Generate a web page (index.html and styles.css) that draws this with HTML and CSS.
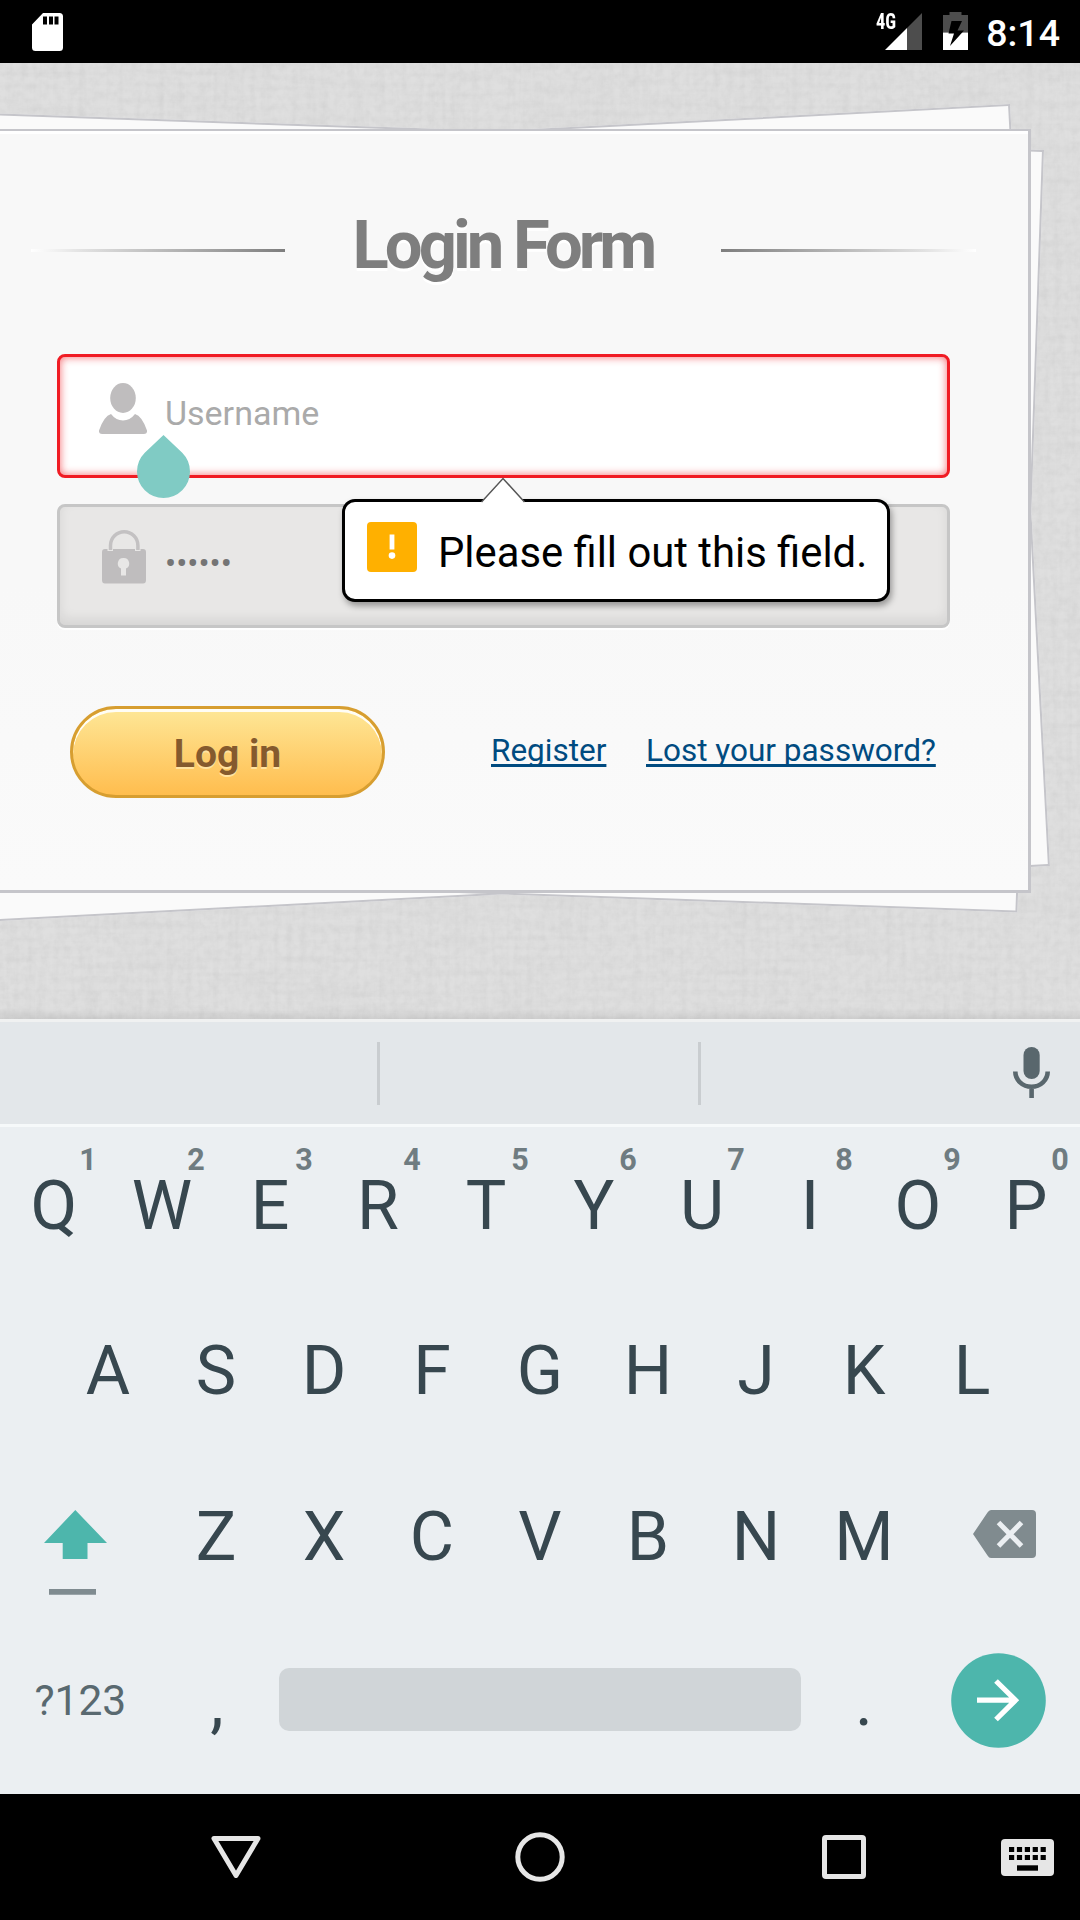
FILE: index.html
```html
<!DOCTYPE html>
<html lang="en">
<head>
<meta charset="utf-8">
<title>Login Form</title>
<link rel="stylesheet" href="styles.css">
</head>
<body>
<header class="status">
  <svg class="sd" viewBox="0 0 31 38"><path fill="#fff" fill-rule="evenodd" d="M11 0H27.500Q31 0 31 3.500V34.500Q31 38 27.500 38H3.500Q0 38 0 34.500V11.500ZM11 3.500V11.500H15V3.500ZM17 3.500V11.500H21V3.500ZM22.500 3.500V11.500H26.500V3.500Z"/></svg>
  <div class="status-right">
    <div class="signal">
      <span class="net">4G</span>
      <svg viewBox="0 0 37 37"><path fill="#4d4d4d" d="M37 0V37H22V15Z"/><path fill="#fff" d="M22 15V37H0Z"/></svg>
    </div>
    <svg class="battery" viewBox="0 0 25 38"><path fill="#4d4d4d" d="M6.500 0H18.500V3H25V20.500H0V3H6.500Z"/><path fill="#fff" d="M0 20.500H25V38H0Z"/><path fill="#000" d="M8.500 9H19L14.500 18.500H21L7 34L11 21.500H5.500Z"/></svg>
    <span class="time">8:14</span>
  </div>
</header>

<main class="page">
  <svg class="linen" width="1080" height="956">
    <filter id="grain" x="0" y="0" width="100%" height="100%"><feTurbulence type="fractalNoise" baseFrequency="0.14" numOctaves="3" seed="4"/><feColorMatrix values="0 0 0 0 0  0 0 0 0 0  0 0 0 0 0  .055 0 0 0 -.02"/></filter>
    <filter id="warp" x="0" y="0" width="100%" height="100%"><feTurbulence type="fractalNoise" baseFrequency="0.15 0.01" numOctaves="2" seed="9"/><feColorMatrix values="0 0 0 0 0  0 0 0 0 0  0 0 0 0 0  .04 0 0 0 -.016"/></filter>
    <filter id="weft" x="0" y="0" width="100%" height="100%"><feTurbulence type="fractalNoise" baseFrequency="0.01 0.15" numOctaves="2" seed="2"/><feColorMatrix values="0 0 0 0 0  0 0 0 0 0  0 0 0 0 0  .04 0 0 0 -.016"/></filter>
    <rect width="1080" height="956" filter="url(#grain)"/>
    <rect width="1080" height="956" filter="url(#warp)"/>
    <rect width="1080" height="956" filter="url(#weft)"/>
  </svg>
  <div class="sheet sheet-left"></div>
  <div class="sheet sheet-right"></div>
  <section class="card">
    <div class="title">
      <span class="rule rule-left"></span>
      <h1>Login Form</h1>
      <span class="rule rule-right"></span>
    </div>
    <div class="fields">
      <div class="field invalid">
        <svg class="user" viewBox="0 0 48 51"><g fill="#bfbdbe"><ellipse cx="24" cy="15" rx="12.800" ry="15"/><path d="M12 31Q17 37.500 24 37.500T36 31Q43 33 48 47.500Q48.500 51 45 51H3Q-.5 51 0 47.500Q5 33 12 31Z"/></g></svg>
        <span class="placeholder">Username</span>
        <svg class="handle" viewBox="0 0 53 63"><path fill="#80cbc4" d="M26.500 0L45.240 17.760A26.500 26.500 0 1 1 7.760 17.760Z"/></svg>
      </div>
      <div class="field">
        <svg class="lock" viewBox="0 0 44 54"><path fill="none" stroke="#c3c1c2" stroke-width="3.500" d="M8.500 20V15.500a13.700 13.700 0 0 1 27.400 0V20"/><path fill="#bfbdbe" d="M3 19H5.500V21H11V19H33V21H38.500V19H41Q44 19 44 22V50Q44 53.500 41 53.500H3Q0 53.500 0 50V22Q0 19 3 19Z"/><path fill="#e8e7e6" d="M21.500 28a5.500 5.500 0 0 1 2.500 10.500V45.500H19V38.500A5.500 5.500 0 0 1 21.500 28Z"/></svg>
        <span class="dots">••••••</span>
        <div class="bubble">
          <svg class="beak" viewBox="0 0 44 26"><path fill="#fff" stroke="#555" stroke-width="1.500" d="M.5 25L22 1.500L43.500 25"/></svg>
          <svg class="warn" viewBox="0 0 50 50"><rect width="50" height="50" rx="4" fill="#ffb000"/><path fill="#fff" d="M22.600 12.500H27.400V27.500H22.600Z"/><circle cx="25" cy="33.600" r="3.300" fill="#fff"/></svg>
          <span>Please fill out this field.</span>
        </div>
      </div>
    </div>
    <div class="actions">
      <button class="login">Log in</button>
      <a class="register">Register</a>
      <a class="lost">Lost your password?</a>
    </div>
  </section>
</main>

<section class="suggest">
  <span></span><span></span>
  <div><svg class="mic" viewBox="0 0 37 51"><rect x="10.500" width="16.200" height="32" rx="8.100" fill="#59676d"/><path fill="none" stroke="#59676d" stroke-width="4.600" d="M2.300 24.500a16.200 15.300 0 0 0 32.400 0M18.600 40V51"/></svg></div>
</section>

<section class="keys">
  <div class="row top">
    <div class="key">Q<sup>1</sup></div><div class="key">W<sup>2</sup></div><div class="key">E<sup>3</sup></div><div class="key">R<sup>4</sup></div><div class="key">T<sup>5</sup></div><div class="key">Y<sup>6</sup></div><div class="key">U<sup>7</sup></div><div class="key">I<sup>8</sup></div><div class="key">O<sup>9</sup></div><div class="key">P<sup>0</sup></div>
  </div>
  <div class="row">
    <div class="key">A</div><div class="key">S</div><div class="key">D</div><div class="key">F</div><div class="key">G</div><div class="key">H</div><div class="key">J</div><div class="key">K</div><div class="key">L</div>
  </div>
  <div class="row">
    <div class="side shift"><svg viewBox="0 0 63 85"><path fill="#4db6ac" d="M31.300 0L63 33H43.500V49H18.700V33H0Z"/><path fill="#7f8b90" d="M5 79H52V84.700H5Z"/></svg></div>
    <div class="key">Z</div><div class="key">X</div><div class="key">C</div><div class="key">V</div><div class="key">B</div><div class="key">N</div><div class="key">M</div>
    <div class="side back"><svg viewBox="0 0 63 48"><path fill="#808b8f" d="M18 0H59Q63 0 63 4V44Q63 48 59 48H18Q16 48 14.500 45.500L0 24L14.500 2.500Q16 0 18 0Z"/><path stroke="#ebeff2" stroke-width="5" d="M25.500 12.500L48.500 36M48.500 12.500L25.500 36"/></svg></div>
  </div>
  <div class="row bottom">
    <div class="sym">?123</div>
    <div class="key">,</div>
    <div class="space"></div>
    <div class="key period">.</div>
    <svg class="enter" viewBox="0 0 95 95"><circle cx="47.500" cy="47.500" r="47.300" fill="#4db6ac"/><path fill="none" stroke="#fff" stroke-width="5.200" d="M26 47.200H64M45 28L64.500 47.200L45 66.500"/></svg>
  </div>
</section>

<nav class="nav">
  <svg class="nav-back" viewBox="0 0 50 42"><path fill="none" stroke="#e6e6e6" stroke-width="5" stroke-linejoin="round" d="M3 2.500H47L25 39.500Z"/></svg>
  <svg class="nav-home" viewBox="0 0 50 50"><circle cx="25" cy="25" r="22.200" fill="none" stroke="#e6e6e6" stroke-width="5"/></svg>
  <svg class="nav-recent" viewBox="0 0 44 44"><rect x="2.500" y="2.500" width="39" height="39" rx="1.500" fill="none" stroke="#e6e6e6" stroke-width="5"/></svg>
  <svg class="nav-ime" viewBox="0 0 53 37"><rect width="53" height="37" rx="4" fill="#e6e6e6"/><path stroke="#000" stroke-width="5.200" stroke-dasharray="5.200 2.700" d="M8 10.500H45M8 18.500H45"/><path fill="#000" d="M16 26.300H37V31.700H16Z"/></svg>
</nav>
</body>
</html>
```
FILE: styles.css
```css
* { box-sizing: border-box; }
body {
  margin: 0;
  width: 1080px;
  height: 1920px;
  overflow: hidden;
  display: flex;
  flex-direction: column;
  font-family: Roboto, "Liberation Sans", sans-serif;
  background: #000;
}
svg { display: block; flex: none; }

.status {
  height: 63px;
  flex: none;
  display: flex;
  justify-content: space-between;
  align-items: flex-start;
  padding: 12px 20px 0 32px;
  color: #fff;
}
.sd { width: 31px; height: 38px; margin-top: 1px; }
.status-right { display: flex; align-items: flex-start; }
.signal { position: relative; width: 37px; padding-top: 1px; margin-right: 21px; }
.signal svg { width: 37px; height: 37px; }
.net {
  position: absolute;
  left: -9px;
  top: 0;
  font: 700 22px/20px "Roboto Condensed", Roboto, sans-serif;
  transform: scaleX(.84);
  transform-origin: 0 0;
}
.battery { width: 25px; height: 38px; margin-right: 18px; }
.time { font-size: 37.500px; font-weight: 500; line-height: 42px; }

.page {
  position: relative;
  height: 956px;
  flex: none;
  overflow: hidden;
  background: #dfdfdf;
  padding-top: 66px;
}
.page::after {
  content: "";
  position: absolute;
  left: 0;
  right: 0;
  bottom: 0;
  height: 10px;
  background: linear-gradient(transparent, rgba(0, 0, 0, .07));
}
.linen { position: absolute; left: 0; top: 0; }
.sheet {
  position: absolute;
  width: 1150px;
  height: 763px;
  border: 2px solid #c5c5ca;
  background: #fafafa;
  transform-origin: 100% 0;
}
.sheet-left { left: -140.500px; top: 41px; transform: rotate(-3deg); }
.sheet-right { left: -106.500px; top: 87px; transform: rotate(2deg); }
.card {
  position: relative;
  width: 1031px;
  height: 764px;
  border: solid #c5c5ca;
  border-width: 2px 3px 3px 0;
  background: linear-gradient(#f8f8f8 60%, #fafafa);
  box-shadow: inset 0 3px #fff;
  padding-top: 76px;
}
.title { display: flex; align-items: center; padding-left: 31px; height: 84px; }
.title h1 {
  width: 436px;
  margin: -8px 0 0;
  text-align: center;
  font-size: 67px;
  line-height: 84px;
  font-weight: 700;
  letter-spacing: -4px;
  color: #7e7e7e;
  text-shadow: 0 3px #fff;
}
.rule { height: 3px; margin-top: 3px; }
.rule-left { width: 254px; background: linear-gradient(90deg, #fff, #e2e2e2 20%, #7e7e7e); }
.rule-right { width: 255px; background: linear-gradient(270deg, #fff, #e2e2e2 20%, #7e7e7e); }
.fields { display: flex; flex-direction: column; gap: 26px; padding: 63px 0 0 57px; }
.field {
  position: relative;
  display: flex;
  width: 893px;
  height: 124px;
  border: 3px solid #c6c6c6;
  border-radius: 8px;
  background: #e8e7e6;
  box-shadow: 0 2px #fff, inset 0 -6px 12px rgba(0, 0, 0, .08);
}
.field.invalid {
  border-color: #f01c24;
  background: #fff;
  box-shadow: inset 0 0 9px rgba(240, 28, 36, .65);
}
.user { width: 48px; height: 51px; margin: 26px 0 0 39px; }
.lock { width: 44px; height: 54px; margin: 23px 0 0 42px; }
.placeholder { margin: 36px 0 0 18px; font-size: 34px; line-height: 40px; color: #aaa; }
.dots { margin: 37px 0 0 19px; font-size: 33px; line-height: 40px; color: #757575; }
.handle { position: absolute; z-index: 2; left: 77px; top: 78px; width: 53px; height: 63px; }
.bubble {
  position: absolute;
  left: 282px;
  top: -8px;
  width: 548px;
  height: 103px;
  display: flex;
  padding: 20px 0 0 22px;
  background: #fff;
  border: 3px solid #000;
  border-radius: 13px;
  box-shadow: 2px 4px 6px rgba(0, 0, 0, .35);
  font-size: 41.800px;
  line-height: 50px;
  color: #000;
}
.beak { position: absolute; left: 136px; top: -25px; width: 44px; height: 26px; }
.warn { width: 50px; height: 50px; margin-right: 21px; }
.bubble span { padding-top: 6px; white-space: nowrap; }
.actions { display: flex; padding: 78px 0 0 70px; align-items: flex-start; }
.login {
  width: 315px;
  height: 92px;
  padding: 3px 0 0;
  border: 3px solid #d79e30;
  border-radius: 46px;
  background: linear-gradient(#fee797, #ffbd4e);
  box-shadow: inset 0 3px #fffdf5;
  color: #855a2d;
  font: 700 39px/50px Roboto, sans-serif;
  text-shadow: 0 2px #ffe2a0;
}
.actions a {
  margin-top: 25px;
  color: #004b80;
  font-size: 31.500px;
  line-height: 40px;
  text-decoration: underline;
  text-decoration-thickness: 2.500px;
  text-underline-offset: 3px;
  text-decoration-skip-ink: none;
  white-space: nowrap;
}
.register { margin-left: 106px; width: 155px; }

.suggest {
  height: 108px;
  flex: none;
  display: grid;
  grid-template-columns: 380px 321px 1fr;
  border-top: 3px solid #f0f1f1;
  border-bottom: 3px solid #f6f9fa;
  background: #e3e7ea;
  padding-top: 20px;
}
.suggest span { height: 63px; border-right: 3px solid #c9cdd0; }
.suggest div { display: flex; justify-content: flex-end; padding: 5px 30px 0 0; }
.mic { width: 37px; height: 51px; }

.keys {
  height: 667px;
  flex: none;
  display: grid;
  grid-template-rows: 161px 165px 166px 161px;
  background: #ebeff2;
  color: #37474f;
}
.row { display: flex; justify-content: center; align-items: center; }
.row.top { padding-bottom: 4px; }
.key { position: relative; width: 108px; text-align: center; font-size: 68px; line-height: 80px; padding-top: 1px; }
.key sup {
  position: absolute;
  left: 70px;
  top: -23px;
  width: 36px;
  font-size: 30.500px;
  line-height: 36px;
  font-weight: 700;
  color: #6f7c81;
}
.side { width: 162px; height: 166px; padding-top: 57px; }
.shift { padding-left: 44px; }
.shift svg { width: 63px; height: 85px; }
.back { padding-left: 55px; }
.back svg { width: 63px; height: 48px; }
.row.bottom { justify-content: flex-start; }
.sym { width: 162px; padding-left: 34.500px; font-size: 42.500px; line-height: 50px; padding-top: 2px; color: #596970; }
.bottom .key { padding-top: 4px; left: 1px; }
.space { width: 522px; height: 63px; margin-left: 9px; border-radius: 10px; background: #d0d5d8; }
.bottom .period { margin-left: 8px; }
.enter { width: 95px; height: 95px; margin: 1px 0 0 34px; }

.nav { height: 126px; flex: none; display: flex; align-items: center; background: #000; padding-left: 211px; }
.nav-back { width: 50px; height: 42px; }
.nav-home { width: 50px; height: 50px; margin-left: 254px; }
.nav-recent { width: 44px; height: 44px; margin-left: 257px; }
.nav-ime { width: 53px; height: 37px; margin-left: 135px; }
```
